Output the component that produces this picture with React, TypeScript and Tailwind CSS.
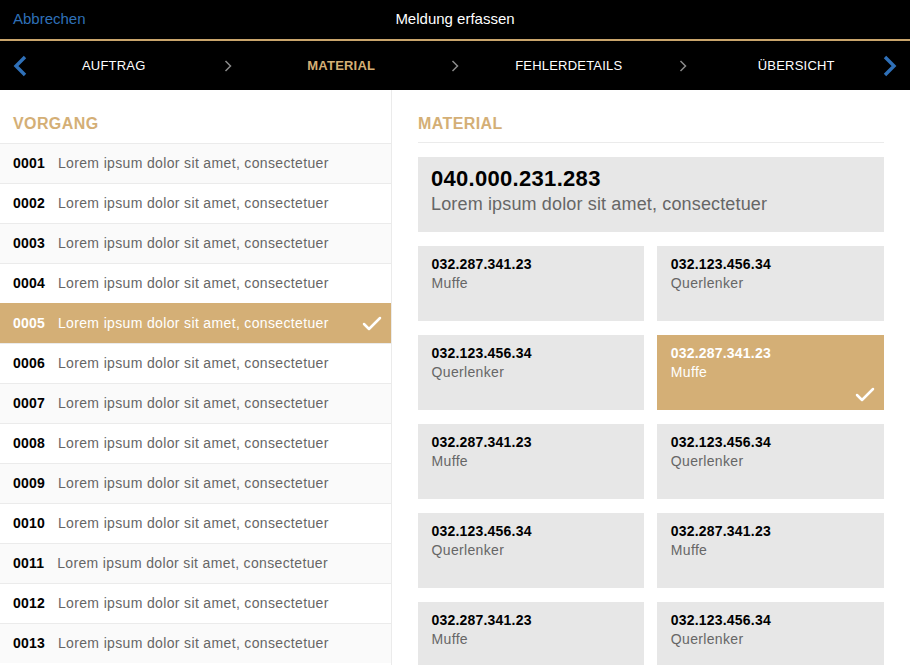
import { Check } from "lucide-react"

const vorgaenge = ["0001", "0002", "0003", "0004", "0005", "0006", "0007", "0008", "0009", "0010", "0011", "0012", "0013"]

const materials = [
  { nr: "032.287.341.23", name: "Muffe" },
  { nr: "032.123.456.34", name: "Querlenker" },
  { nr: "032.123.456.34", name: "Querlenker" },
  { nr: "032.287.341.23", name: "Muffe", active: true },
  { nr: "032.287.341.23", name: "Muffe" },
  { nr: "032.123.456.34", name: "Querlenker" },
  { nr: "032.123.456.34", name: "Querlenker" },
  { nr: "032.287.341.23", name: "Muffe" },
  { nr: "032.287.341.23", name: "Muffe" },
  { nr: "032.123.456.34", name: "Querlenker" },
]

const steps = ["AUFTRAG", "MATERIAL", "FEHLERDETAILS", "ÜBERSICHT"]

export default function App() {
  return (
    <div className="h-[665px] w-[910px] overflow-hidden bg-white font-['Liberation_Sans',Arial,sans-serif]">
      {/* Header */}
      <header className="relative flex h-[39px] items-center bg-black px-[13px] text-[15px]">
        <span className="text-[#2f70b8]">Abbrechen</span>
        <span className="absolute inset-x-0 text-center text-white">Meldung erfassen</span>
      </header>
      <div className="h-[2px] bg-[#c9a56c]" />

      {/* Steps */}
      <nav className="relative grid h-[49px] grid-cols-4 items-center bg-black pb-[2px]">
        <svg className="absolute left-[13px] top-[14px] h-[22px] w-[14px]" viewBox="0 0 14 22" fill="none">
          <path d="M12 2 L3 11 L12 20" stroke="#2f70b8" strokeWidth="3.4" />
        </svg>
        {steps.map((step, i) => (
          <div key={step} className="relative text-center">
            <span className={`text-[13px] tracking-[0.2px] ${step === "MATERIAL" ? "font-bold text-[#d4af76]" : "text-white"}`}>
              {step}
            </span>
            {i < steps.length - 1 && (
              <svg className="absolute right-[-4px] top-[7px] h-[12px] w-[8px]" viewBox="0 0 8 12" fill="none">
                <path d="M1.5 1 L6.5 6 L1.5 11" stroke="#8a8a8a" strokeWidth="1.5" />
              </svg>
            )}
          </div>
        ))}
        <svg className="absolute right-[13px] top-[14px] h-[22px] w-[14px]" viewBox="0 0 14 22" fill="none">
          <path d="M2 2 L11 11 L2 20" stroke="#2f70b8" strokeWidth="3.4" />
        </svg>
      </nav>

      <div className="flex">
        {/* Vorgang list */}
        <aside className="h-[575px] w-[392px] shrink-0 overflow-hidden border-r border-[#ebebeb]">
          <h2 className="flex h-[53px] items-center px-[13px] pt-[15px] text-[16px] font-bold tracking-[0.4px] text-[#d4af76]">
            VORGANG
          </h2>
          <ul>
            {vorgaenge.map((nr, i) => {
              const active = nr === "0005"
              return (
                <li
                  key={nr}
                  className={`flex h-[40px] items-center justify-between border-t pl-[13px] pr-[7px] text-[14px] tracking-[0.35px] ${
                    active ? "border-transparent bg-[#d4af76] text-white" : i % 2 === 0 ? "border-[#ebebeb] bg-[#fafafa]" : "border-[#ebebeb] bg-white"
                  }`}
                >
                  <span className="[font-kerning:normal]">
                    <span className={`mr-[13px] font-bold tracking-[0.2px] ${active ? "text-white" : "text-black"}`}>{nr}</span>
                    <span className={active ? "text-white" : "text-[#666666]"}>Lorem ipsum dolor sit amet, consectetuer</span>
                  </span>
                  {active && <Check className="h-6 w-6 text-white" strokeWidth={2.5} />}
                </li>
              )
            })}
          </ul>
        </aside>

        {/* Material */}
        <main className="flex-1 pl-[26px] pr-[26.5px]">
          <h2 className="flex h-[53px] items-center border-b border-[#ebebeb] pt-[15px] text-[16px] font-bold tracking-[0.4px] text-[#d4af76]">
            MATERIAL
          </h2>
          <div className="mt-[14px] h-[75px] bg-[#e7e7e7] px-[13px] pt-[9px]">
            <div className="text-[22px] font-bold leading-[26px] tracking-[0.3px] text-black">040.000.231.283</div>
            <div className="text-[18px] leading-[24px] tracking-[0.15px] text-[#666666]">Lorem ipsum dolor sit amet, consectetuer</div>
          </div>
          <div className="mt-[14px] grid grid-cols-2 gap-x-[13px] gap-y-[14px]">
            {materials.map((m, i) => (
              <div
                key={i}
                className={`relative h-[75px] px-[13.5px] pt-[9px] text-[14px] ${m.active ? "bg-[#d4af76] text-white" : "bg-[#e7e7e7]"}`}
              >
                <div className={`font-bold leading-[19px] tracking-[0.2px] ${m.active ? "text-white" : "text-black"}`}>{m.nr}</div>
                <div className={`leading-[19px] tracking-[0.35px] ${m.active ? "text-white" : "text-[#666666]"}`}>{m.name}</div>
                {m.active && <Check className="absolute bottom-[3px] right-[6.5px] h-6 w-6 text-white" strokeWidth={2.5} />}
              </div>
            ))}
          </div>
        </main>
      </div>
    </div>
  )
}
